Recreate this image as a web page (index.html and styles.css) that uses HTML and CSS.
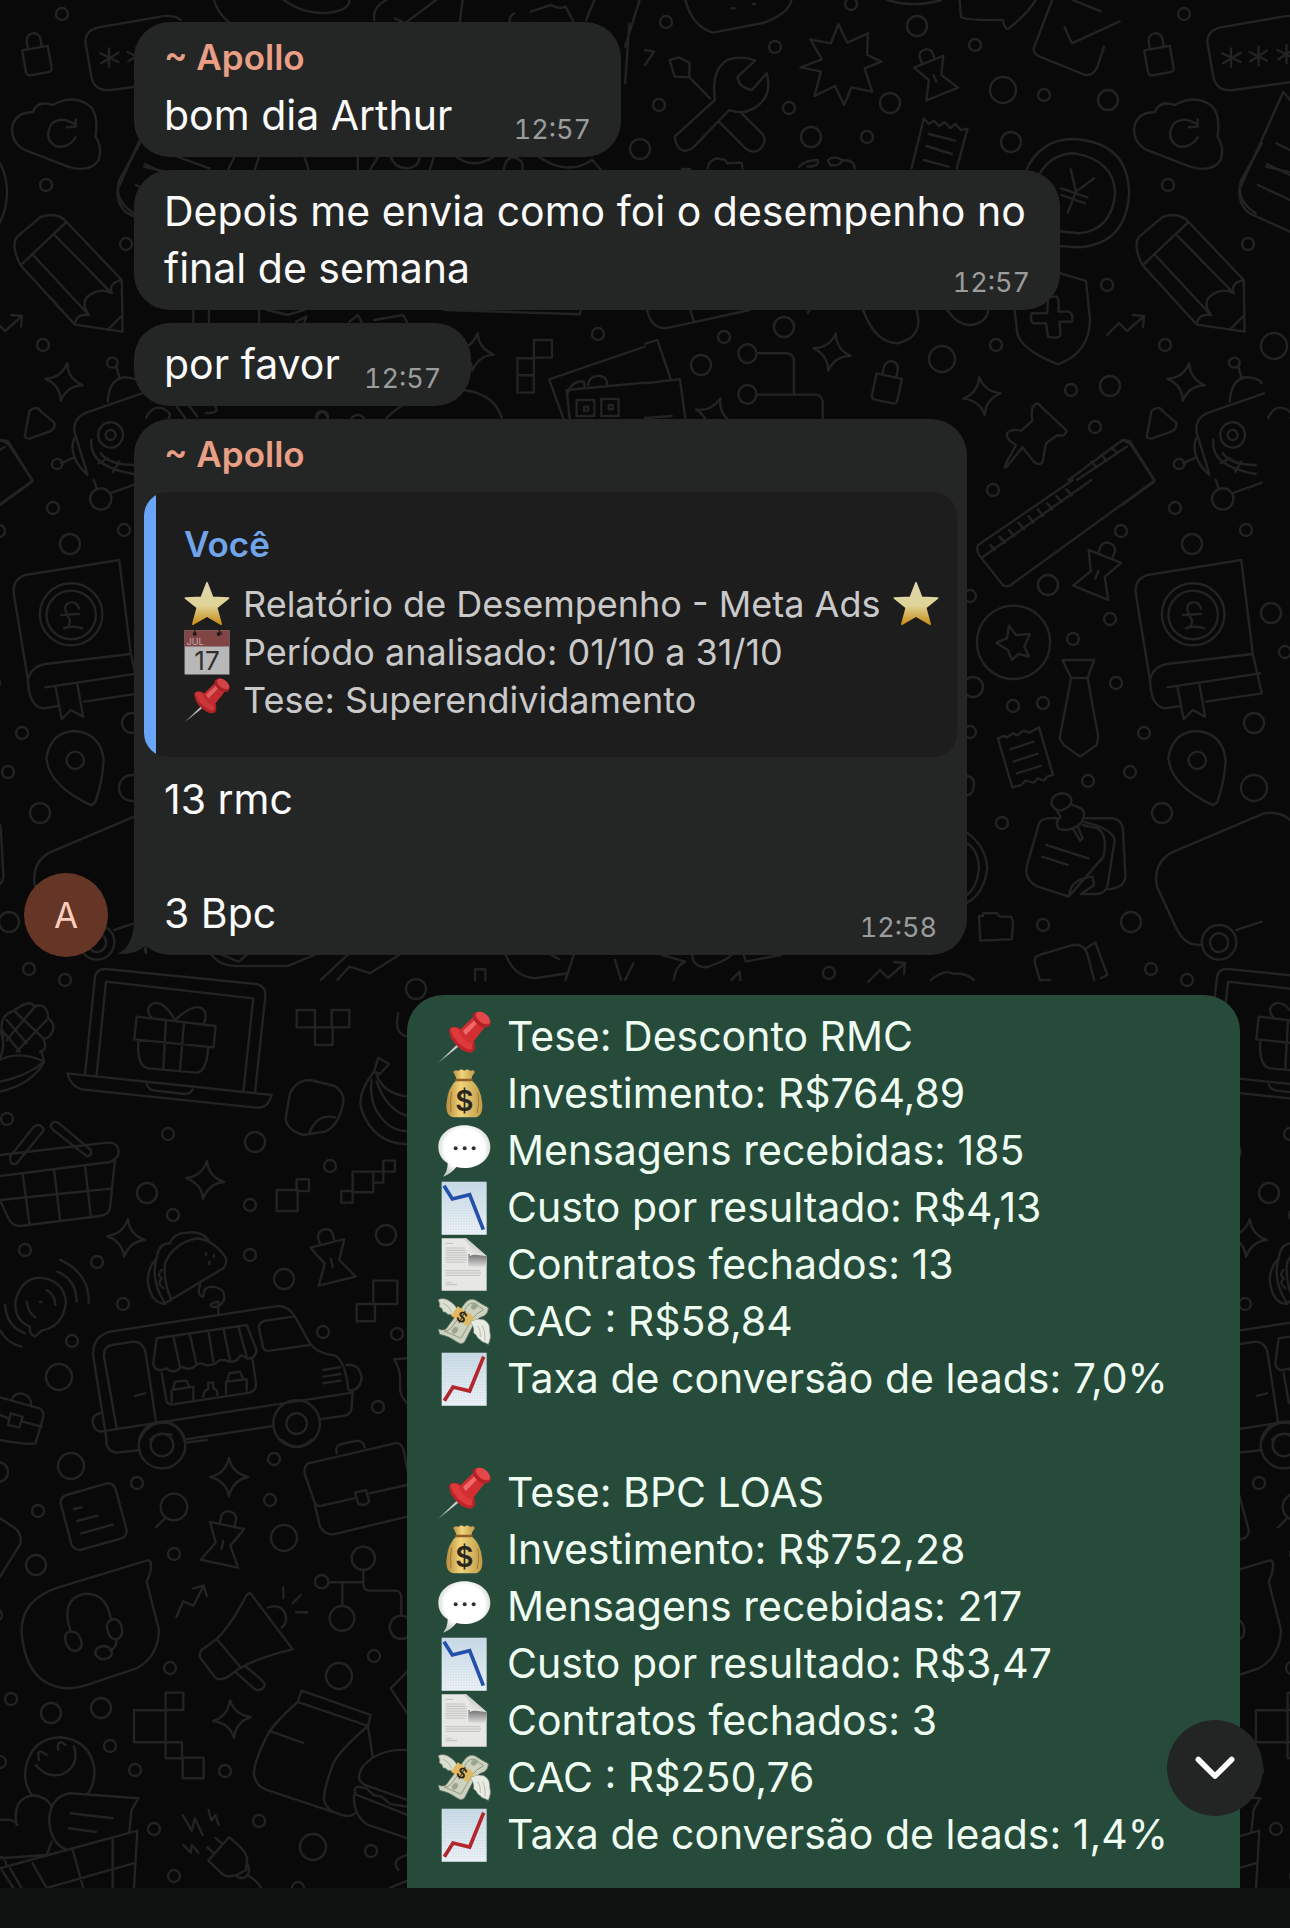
FILE: index.html
```html
<!DOCTYPE html>
<html lang="pt-BR">
<head>
  <meta charset="UTF-8">
  <meta name="viewport" content="width=device-width, initial-scale=1.0">
  <title>Conversa</title>
  <link rel="stylesheet" href="styles.css">
</head>
<body>
  <!-- Icon definitions -->
  <svg class="defs" aria-hidden="true">
    <defs>
      <linearGradient id="gold" x1="0" y1="0" x2="0" y2="1">
        <stop offset="0" stop-color="#f3e9c0" />
        <stop offset="0.55" stop-color="#f4e8a4" />
        <stop offset="1" stop-color="#dc9a18" />
      </linearGradient>
      <linearGradient id="sack" x1="0" y1="0" x2="1" y2="0">
        <stop offset="0" stop-color="#b98d3c" />
        <stop offset="0.4" stop-color="#f0d47c" />
        <stop offset="1" stop-color="#c29a48" />
      </linearGradient>
      <linearGradient id="sheet" x1="0" y1="0" x2="0" y2="1">
        <stop offset="0" stop-color="#c9dbe8" />
        <stop offset="1" stop-color="#eef4f8" />
      </linearGradient>
      <linearGradient id="shade" x1="0" y1="0" x2="0" y2="1">
        <stop offset="0" stop-color="#6e6f6e" />
        <stop offset="1" stop-color="#e7e7e5" />
      </linearGradient>
      <linearGradient id="curl" x1="0" y1="1" x2="1" y2="0">
        <stop offset="0" stop-color="#ffffff" />
        <stop offset="0.5" stop-color="#d4d4d3" />
        <stop offset="1" stop-color="#5f6160" />
      </linearGradient>
      <radialGradient id="balloon" cx="0.5" cy="0.45" r="0.55">
        <stop offset="0.7" stop-color="#ffffff" />
        <stop offset="1" stop-color="#c9cfcd" />
      </radialGradient>
      <pattern id="grid" width="8" height="8" patternUnits="userSpaceOnUse">
        <path d="M0 0H8M0 0V8" stroke="#aec3d2" stroke-width="1" />
      </pattern>
      <symbol id="pin" viewBox="0 0 162 162">
        <path d="M74 90L81 97L4 158Z" fill="#c9cdd0" />
        <path d="M36 58Q44 46 64 52L112 96Q118 118 106 127Q84 130 62 110Q36 86 36 58Z" fill="#bd2429" />
        <path d="M40 56Q52 48 68 60L106 98Q108 112 102 120Q84 116 64 98Q44 76 40 56Z" fill="#dc3a3d" />
        <path d="M64 64L110 20L146 48L104 102Q78 92 64 64Z" fill="#d42d32" />
        <path d="M78 62L116 28L126 34L86 76Z" fill="#ee6a68" />
        <ellipse cx="134" cy="29" rx="30" ry="19" transform="rotate(38 134 29)" fill="#b52126" />
        <ellipse cx="138" cy="24" rx="25" ry="14" transform="rotate(38 138 24)" fill="#e5484a" />
      </symbol>
      <symbol id="bag" viewBox="0 0 162 162">
        <path d="M48 14Q56 6 64 12Q72 4 82 11Q92 4 100 12Q110 6 114 15Q104 26 102 40H60Q56 26 48 14Z" fill="url(#sack)" />
        <path d="M60 38H102Q132 60 136 110Q138 150 112 151H52Q26 150 28 112Q32 60 60 38Z" fill="url(#sack)" />
        <path d="M58 39H104" stroke="#8a5f2b" stroke-width="7" stroke-linecap="round" />
        <path d="M44 74Q38 100 42 136M122 78Q128 104 120 138" fill="none" stroke="#a27a31" stroke-width="3" />
        <text x="82" y="132" text-anchor="middle" class="dollar">$</text>
      </symbol>
      <symbol id="talk" viewBox="0 0 162 162">
        <path d="M82 4C126 4 160 32 160 68C160 106 124 132 82 132C74 132 66 131 58 129Q44 148 18 158Q32 142 32 118C14 106 4 90 4 68C4 32 38 4 82 4Z" fill="url(#balloon)" />
        <g fill="#2e3136"><circle cx="56" cy="73" r="6" /><circle cx="83" cy="73" r="6" /><circle cx="110" cy="73" r="6" /></g>
      </symbol>
      <symbol id="chart-down" viewBox="0 0 162 162">
        <path d="M14 2H149V161H14Z" fill="url(#sheet)" /><path d="M14 2H149V161H14Z" fill="url(#grid)" />
        <path d="M21 14L46 54L98 41L139 146" fill="none" stroke="#2450ab" stroke-width="11" />
      </symbol>
      <symbol id="chart-up" viewBox="0 0 162 162">
        <path d="M14 2H149V161H14Z" fill="url(#sheet)" /><path d="M14 2H149V161H14Z" fill="url(#grid)" />
        <path d="M22 146L48 105L98 117L140 14" fill="none" stroke="#b3262b" stroke-width="11" />
      </symbol>
      <symbol id="page" viewBox="0 0 162 162">
        <path d="M14 1H88L149 54V158H14Z" fill="#e7e7e5" />
        <path d="M26 16H48M26 30H84M26 37H88M26 44H90M26 51H90M26 58H90M26 65H90M26 72H86M26 98H128M26 105H132M26 112H128M26 134H46M26 140H60" stroke="#adadac" stroke-width="2" />
        <path d="M94 48L149 54V84Q120 96 94 84Z" fill="url(#shade)" />
        <path d="M78 1H88L149 54Q122 42 98 54Q104 22 78 1Z" fill="url(#curl)" />
      </symbol>
      <symbol id="money" viewBox="0 0 162 162">
        <path d="M4 14Q22 6 40 20Q60 32 62 54L48 62Q42 56 32 58Q30 50 18 50Q18 40 8 36Q10 26 4 14Z" fill="#dbdfd2" stroke="#8e9789" stroke-width="2" />
        <path d="M4 102Q24 112 34 92Q62 56 80 30Q96 6 116 16Q134 28 154 38Q154 54 142 62Q124 66 112 84Q94 118 82 142Q72 150 62 142Q34 122 8 118Z" fill="#ccd2bd" stroke="#6f7a6b" stroke-width="2" />
        <path d="M22 108Q38 108 48 92L90 34Q102 20 114 26L140 44Q120 52 104 74L72 130Z" fill="none" stroke="#8f9a86" stroke-width="3" />
        <ellipse cx="54" cy="106" rx="11" ry="8" transform="rotate(-50 54 106)" fill="#99a58f" />
        <ellipse cx="112" cy="34" rx="11" ry="8" transform="rotate(-40 112 34)" fill="#99a58f" />
        <path d="M62 34L112 66L92 94L42 62Z" fill="#e0b962" />
        <text x="74" y="82" text-anchor="middle" transform="rotate(28 74 68)" class="dollar dollar-small">$</text>
        <path d="M100 80Q118 68 140 74Q160 84 158 108Q164 128 154 148Q144 142 136 140Q128 132 122 128Q118 118 110 114Q114 98 100 80Z" fill="#e9ebe2" stroke="#8e9789" stroke-width="2" />
        <path d="M122 92Q132 104 130 126M136 92Q146 108 144 136M18 24Q34 30 44 52" fill="none" stroke="#9aa294" stroke-width="2" />
      </symbol>
      <symbol id="star" viewBox="0 0 162 162">
        <path d="M81 6L101 58L157 60L115 94L131 152L81 123L31 152L47 94L5 60L61 58Z" fill="url(#gold)" stroke="url(#gold)" stroke-width="6" stroke-linejoin="round" />
      </symbol>
      <symbol id="calendar" viewBox="0 0 162 162">
        <path d="M2 4H160V160H2Z" fill="#c9c9c9" />
        <path d="M2 4H160V62H2Z" fill="#8d4a4b" />
        <circle cx="38" cy="18" r="7" fill="#231718" /><circle cx="122" cy="18" r="7" fill="#231718" />
        <path d="M38 2V18M122 2L134 20" stroke="#231718" stroke-width="4" />
        <text x="9" y="56" class="cal-month">JUL</text>
        <text x="81" y="146" text-anchor="middle" class="cal-day">17</text>
      </symbol>

      <!-- Wallpaper doodles -->
      <path id="spark" d="M0 -19Q3 -4 19 0Q4 3 0 19Q-3 4 -19 0Q-4 -3 0 -19Z" />
      <path id="tack" d="M-7 -17V-26A8 8 0 0 1 8 -26V-17M-17 -17H18L8 2L20 22H-18L-7 2ZM0 -1V7" />
      <path id="lock" d="M-13 -6H13V16Q13 20 9 20H-9Q-13 20 -13 16ZM-7 -6V-14A7 7 0 0 1 7 -14V-6" />
      <path id="trend" d="M-20 8L-8 -4L0 4L16 -10M6 -12L17 -11L16 0" />
      <g id="tile">
        <g class="dots-s">
          <circle cx="62" cy="14" /><circle cx="46" cy="185" /><circle cx="126" cy="244" /><circle cx="43" cy="345" /><circle cx="598" cy="334" />
          <circle cx="666" cy="22" /><circle cx="851" cy="4" /><circle cx="775" cy="47" /><circle cx="975" cy="45" /><circle cx="1044" cy="95" />
          <circle cx="659" cy="105" /><circle cx="789" cy="108" /><circle cx="867" cy="137" /><circle cx="1107" cy="285" /><circle cx="724" cy="337" />
          <circle cx="996" cy="345" /><circle cx="1071" cy="390" /><circle cx="1095" cy="427" /><circle cx="322" cy="417" /><circle cx="53" cy="508" /><circle cx="124" cy="530" />
          <circle cx="22" cy="733" /><circle cx="8" cy="772" /><circle cx="29" cy="969" /><circle cx="993" cy="490" /><circle cx="1121" cy="531" />
          <circle cx="1110" cy="619" /><circle cx="163" cy="652" /><circle cx="970" cy="596" /><circle cx="1073" cy="639" /><circle cx="1013" cy="706" />
          <circle cx="1043" cy="703" /><circle cx="1116" cy="683" /><circle cx="970" cy="732" /><circle cx="1088" cy="781" /><circle cx="1002" cy="823" />
          <circle cx="1043" cy="925" /><circle cx="829" cy="973" /><circle cx="65" cy="980" /><circle cx="7" cy="1119" /><circle cx="168" cy="1134" />
          <circle cx="330" cy="1166" /><circle cx="250" cy="1205" /><circle cx="173" cy="1215" /><circle cx="25" cy="1250" /><circle cx="97" cy="1262" />
          <circle cx="250" cy="1255" /><circle cx="123" cy="1304" /><circle cx="323" cy="1332" /><circle cx="397" cy="1334" /><circle cx="72" cy="1341" />
          <circle cx="378" cy="1407" /><circle cx="274" cy="1459" /><circle cx="137" cy="1483" /><circle cx="38" cy="1511" /><circle cx="270" cy="1500" />
          <circle cx="174" cy="1554" /><circle cx="374" cy="1656" /><circle cx="170" cy="1668" /><circle cx="11" cy="1699" /><circle cx="110" cy="1746" />
          <circle cx="135" cy="1770" /><circle cx="225" cy="1771" /><circle cx="0" cy="1762" /><circle cx="154" cy="1829" /><circle cx="259" cy="1821" />
          <circle cx="371" cy="1851" /><circle cx="174" cy="1876" /><circle cx="298" cy="1888" /><circle cx="-4" cy="1615" />
        </g>
        <g class="dots-m">
          <circle cx="640" cy="149" /><circle cx="917" cy="26" /><circle cx="890" cy="103" /><circle cx="1108" cy="100" /><circle cx="811" cy="137" />
          <circle cx="1011" cy="142" /><circle cx="784" cy="327" /><circle cx="701" cy="365" /><circle cx="1110" cy="386" /><circle cx="70" cy="544" />
          <circle cx="40" cy="813" /><circle cx="9" cy="922" /><circle cx="132" cy="723" /><circle cx="1048" cy="585" /><circle cx="149" cy="613" />
          <circle cx="973" cy="687" /><circle cx="416" cy="989" /><circle cx="255" cy="1142" /><circle cx="147" cy="1193" /><circle cx="386" cy="1235" />
          <circle cx="284" cy="1279" /><circle cx="-2" cy="1472" /><circle cx="36" cy="1565" /><circle cx="51" cy="1713" /><circle cx="101" cy="1708" />
        </g>
        <g class="dots-l">
          <circle cx="1003" cy="90" /><circle cx="942" cy="359" /><circle cx="152" cy="346" /><circle cx="132" cy="788" /><circle cx="59" cy="1377" />
          <circle cx="71" cy="1466" /><circle cx="284" cy="1538" /><circle cx="339" cy="1676" /><circle cx="313" cy="1847" />
        </g>
        <use href="#spark" transform="translate(64 382) rotate(10)" />
        <use href="#spark" transform="translate(475 352) rotate(8)" />
        <use href="#spark" transform="translate(832 352) rotate(12)" />
        <use href="#spark" transform="translate(982 396) rotate(-8)" />
        <use href="#spark" transform="translate(714 416) rotate(20)" />
        <use href="#spark" transform="translate(205 1180) rotate(6)" />
        <use href="#spark" transform="translate(126 1238) rotate(6)" />
        <use href="#spark" transform="translate(229 1477)" />
        <use href="#spark" transform="translate(232 1719) rotate(-6)" />
        <use href="#tack" transform="translate(934 76) rotate(-22) scale(.9)" />
        <use href="#tack" transform="translate(1098 572) rotate(22)" />
        <use href="#tack" transform="translate(331 1260) rotate(-14)" />
        <use href="#tack" transform="translate(223 1542) rotate(12)" />
        <use href="#lock" transform="translate(36 54) rotate(-10)" />
        <use href="#lock" transform="translate(888 382) rotate(12)" />
        <use href="#trend" transform="translate(1127 327)" />
        <use href="#trend" transform="translate(888 974)" />
        <use href="#trend" transform="translate(192 1602) rotate(-22)" />

        <!-- top left: password, cloud, pencil, robot -->
        <g transform="scale(.4113 .3333)">
          <path d="M440 60Q420 40 380 52L240 82Q205 92 208 130L222 230Q230 275 270 270L420 245M265 145V200M244 160L288 186M288 158L246 190M332 140V196M310 156L352 182M352 152L312 184M400 134V190M378 150L420 176M420 146L380 178" />
          <path d="M60 450Q20 420 32 370Q45 335 80 337Q90 300 128 315Q180 280 220 320Q240 350 232 410Q250 440 240 480Q220 520 165 500ZM184 375Q150 345 125 372Q105 415 135 438Q165 448 184 412M184 358V380L162 382" />
          <path d="M50 796L162 666L296 840L298 995L182 974ZM50 796Q25 735 42 710L100 650Q140 635 162 666M78 762L216 945M135 708L272 880M182 974Q185 940 216 945Q190 900 228 878Q250 865 272 880Q262 850 296 840M262 990L298 945" />
          <path d="M520 0Q530 40 555 64M690 0Q740 45 800 38Q850 30 850 0M910 60Q905 20 940 0M960 55L985 70L1060 0M1125 0L1118 64M1250 40A26 26 0 1 0 1290 68M1290 35L1340 15Q1360 30 1375 20L1394 64M1445 0L1425 60M1530 70L1520 250M1555 0L1520 140" />
          <path d="M340 430L290 540Q275 600 325 640M350 500L420 520M430 470L510 505M570 470L555 508M630 470L620 508M740 470L750 508M870 470V508M920 470L900 508M950 470Q960 505 990 505Q1020 500 1020 470M1045 510L1055 470M1110 470Q1150 510 1200 470M1225 508Q1230 470 1250 472Q1275 480 1270 508M1310 470Q1380 530 1440 480L1460 508M630 930V968M470 930V968M508 930V968M650 930L700 945L740 930M720 965L745 950L740 968M850 965L870 945L880 968M910 960L980 945L990 968M1080 930L1410 943L1412 925" />
          <path d="M60 1310L72 1232Q90 1215 100 1235L132 1268Q136 1285 120 1295L72 1316Q62 1316 60 1310ZM262 1205Q265 1140 300 1132Q330 1132 340 1150M283 1100L290 1132M272 1073A13 15 0 1 0 274 1103A13 15 0 1 0 272 1073M345 1180L205 1240Q175 1260 182 1300L212 1420M180 1315Q165 1370 212 1425M148 1390L180 1372M138 1377A13 15 0 1 0 140 1407A13 15 0 1 0 138 1377M268 1267A30 38 0 1 0 270 1343A30 38 0 1 0 268 1267M268 1290A12 15 0 1 0 270 1320A12 15 0 1 0 268 1290M222 1320Q215 1400 325 1422M245 1360Q265 1395 325 1395M240 1390L262 1375M275 1415L290 1385M0 1320Q20 1325 30 1350L78 1440" />
          <path d="M1258 1075H1298V1020H1342V1073H1298V1178H1258ZM1258 1126H1298M1335 1138L1568 1040M1335 1138L1370 1256M1378 1170L1568 1148M1378 1170L1385 1256M1380 1180Q1390 1140 1420 1145L1422 1165M1430 1155Q1432 1125 1460 1128Q1480 1135 1475 1160M1402 1200H1445V1248H1402ZM1462 1197H1504V1248H1462ZM1420 1220H1430V1232H1420ZM1480 1215H1490V1228H1480ZM940 1254Q1000 1180 1100 1168Q1200 1170 1220 1254M355 1254Q370 1215 395 1225Q420 1240 410 1254M430 1220L450 1254M460 1218L480 1250M520 1215Q540 1240 500 1240M770 1254Q775 1230 790 1238L797 1254M855 1254Q870 1235 885 1254" />
        </g>

        <!-- top right: tools, burst, receipt, coin, shield, ruler -->
        <g transform="translate(645 0) scale(.4113 .3333)">
          <path d="M98 0Q115 80 165 98L290 68Q350 40 356 0M210 25H218M262 12H268M590 0Q650 25 720 0M765 0L768 50Q775 62 870 60Q875 92 885 85Q930 40 950 0M990 0L945 145Q945 165 960 170L1070 225Q1090 228 1100 200L1116 140M1020 82L1038 130L1154 64M1040 0L1108 34" />
          <path d="M470 72L492 128L542 100L540 165L575 185L534 205L552 275L502 262L484 315L462 258L412 288L428 215L378 202L430 178L402 118L452 130Z" />
          <path d="M72 410L170 300Q160 210 200 180Q235 165 268 182L225 230Q228 265 260 270L296 220Q312 290 265 325Q235 345 205 330L115 445Q80 470 72 410ZM60 180L82 172L108 188V232L72 230ZM108 232L158 295M182 368L240 440Q265 470 285 440Q298 415 280 395L235 340M0 150L22 155L0 195" />
          <path d="M648 505L678 355L690 372L702 362L715 378L728 366L742 384L755 372L768 390L784 386L758 505M690 402L754 422M684 438L746 462M678 480L738 500M152 505Q155 480 175 475L195 480L200 490L235 488L237 505M375 500Q390 480 420 480Q425 500 395 500M445 480Q460 465 480 480Q475 500 450 495ZM480 480Q510 480 510 505M90 507H110" />
          <path d="M925 515Q960 418 1040 417Q1175 425 1177 580Q1170 735 1050 742L1008 738M960 520Q990 460 1045 460Q1140 480 1143 580Q1135 690 1055 700L1008 694M1035 508L1048 575L1092 535M1048 575L1028 638M1012 565L1076 592M1012 585L1070 610" />
          <path d="M1010 820L1072 843L1082 960Q1080 1060 1004 1093Q915 1050 905 1000L898 920M980 890H1000Q1008 895 1005 935H1030Q1042 940 1038 965H1008L1010 1005Q1005 1018 980 1010L975 970H945Q935 965 940 940H978ZM530 930Q560 1030 615 1030Q680 1010 660 930M735 930Q760 975 790 975Q830 970 835 930M5 930Q15 985 50 985L255 930M110 930L118 962M400 930L396 938" />
          <path d="M248 1033A22 28 0 1 0 250 1089A22 28 0 1 0 248 1033M248 1155A22 28 0 1 0 250 1211A22 28 0 1 0 248 1155M272 1060H345Q362 1062 362 1085V1182M272 1184H415Q430 1186 432 1205V1256M0 1032L30 1020L62 1136M0 1150L85 1138L98 1256M0 1254L65 1248" />
          <path d="M955 1210L1025 1292Q1022 1312 1002 1306L975 1330L966 1388Q955 1400 942 1380L918 1342L880 1400Q870 1410 880 1385L902 1335Q878 1320 880 1300Q890 1285 915 1292L942 1262Q935 1215 955 1210ZM1030 1440L1150 1330Q1165 1315 1180 1325L1238 1440M1050 1440L1172 1340M1085 1385L1098 1402M1110 1365L1122 1382M1135 1343L1148 1360" />
          <path d="M1552 275L1445 570Q1445 620 1470 640L1568 695M1552 275L1568 300M1535 430L1568 450M1512 492L1568 525M1490 555L1568 600" />
        </g>

        <!-- middle left: book, place mark, cart -->
        <g transform="translate(0 480) scale(.4113 .3333)">
          <path d="M290 240L62 285Q28 300 34 345L68 600Q75 560 110 552L318 522ZM68 600Q70 680 105 685L140 678M110 622L336 580M318 522L340 640L204 665M135 622L150 718L172 690L202 710L188 612M172 310A76 93 0 1 0 174 496A76 93 0 1 0 172 310M172 332A60 73 0 1 0 174 478A60 73 0 1 0 172 332M192 385Q185 360 165 370Q150 380 170 420Q172 440 155 445Q180 435 200 445M148 405L192 402" />
          <path d="M222 976Q115 915 113 830Q125 755 182 753Q245 760 252 840Q250 900 232 966ZM182 815A21 26 0 1 0 184 867A21 26 0 1 0 182 815M244 25A26 32 0 1 0 246 89A26 32 0 1 0 244 25M228 0L236 28M268 40L340 8M0 75L78 5" />
          <path d="M190 1395L175 1393Q150 1390 130 1340L85 1220Q75 1150 120 1118L345 1000Q400 990 430 1050M235 1335A42 52 0 1 0 237 1439A42 52 0 1 0 235 1335M235 1360A22 28 0 1 0 237 1416A22 28 0 1 0 235 1360M278 1350L340 1325" />
          <path d="M515 1425Q530 1455 570 1458H700L765 1425M540 1425L580 1445L600 1425M780 1500L845 1425M820 1500L850 1460L900 1480L970 1425M1230 1425Q1250 1490 1300 1495L1380 1480M1395 1425L1375 1500M1340 1425L1360 1438M1155 1500V1468H1180V1500M1495 1440L1510 1500M1540 1450L1520 1500" />
        </g>

        <!-- middle right: ruler end, badge, tie, ticket, note, camera -->
        <g transform="translate(645 480) scale(.4113 .3333)">
          <path d="M1040 0L810 195Q805 210 812 225L870 315Q882 325 895 310L1230 10L1238 0M820 232L1085 0M840 195L850 210M862 170L875 188M885 150L898 168M908 128L922 148M932 108L945 128M955 88L968 108M978 70L990 88M1000 48L1014 66M1024 28L1038 46" />
          <path d="M895 377A89 110 0 1 0 897 597A89 110 0 1 0 895 377M885 437L902 465L936 462L922 500L934 530L908 522L892 540L882 510L854 488L880 475Z" />
          <path d="M1015 540H1092L1076 594H1036ZM1036 594L1008 775L1018 795L1058 830L1098 795L1102 770L1076 594M858 775L872 768L880 772L895 760L905 766L920 752L935 758L958 742L992 885L978 890L970 902L955 895L945 908L925 902L915 915L893 922ZM888 808L945 785M896 845L954 822M904 880L962 858" />
          <path d="M1000 1015Q965 1012 958 1030L928 1160Q922 1200 955 1220L1030 1250L1115 1130Q1125 1060 1100 1045L1065 1035M1030 1250Q1035 1195 1088 1190L1092 1215L1060 1242H1100Q1120 1240 1125 1215L1142 1080Q1135 1045 1065 1025M1072 1015H1130Q1160 1015 1162 1050L1168 1190Q1165 1225 1125 1228M975 1095L1078 1135M965 1130L1028 1155M1012 940Q988 945 988 970Q995 995 1015 990Q1040 980 1036 955Q1030 940 1012 940ZM1000 990L1010 1010Q995 1030 1005 1045Q1030 1060 1060 1030Q1075 1000 1060 985L1040 975M1040 1045L1058 1082L1064 1075L1052 1040" />
          <path d="M812 1308H822V1300H856L862 1310H890L895 1325L892 1378L815 1382ZM985 1500H960L948 1450Q945 1430 960 1425L1040 1395Q1065 1390 1075 1420L1092 1500M1072 1405L1095 1388L1124 1485L1108 1495M783 1058Q830 1100 832 1165Q825 1240 783 1268M783 1090Q810 1110 812 1165Q808 1220 783 1245M783 888Q800 890 800 915Q798 945 783 946M70 1500Q75 1455 98 1445L40 1425M115 1425Q115 1460 150 1462Q200 1440 210 1425M240 1425L245 1445L330 1425M210 1500L230 1475L232 1500M695 1500Q730 1465 750 1482Q775 1475 800 1500" />
        </g>

        <!-- lower left: laptop, corn, basket, taco, van -->
        <g transform="translate(0 960) scale(.3333)">
          <path d="M255 345L285 50Q290 25 318 27L770 72Q800 80 796 110L765 398M290 345L318 65L760 115L730 395M202 340L815 405Q805 445 770 443L245 388Q212 380 202 340ZM440 372Q445 390 465 392L555 402Q570 402 578 388M410 170L647 198L641 262L403 238ZM415 240Q410 320 445 325L590 338Q620 335 625 262M498 182L490 325M552 188L540 332M525 180Q490 120 460 130Q430 145 457 175M525 180Q580 130 605 145Q625 160 612 190" />
          <path d="M0 300Q60 270 132 305Q100 370 0 395M0 365Q80 350 132 305L125 275M10 230Q-5 180 25 160Q45 150 60 140Q90 120 105 140Q140 125 145 175Q170 195 155 220Q140 240 130 235Q145 270 120 275M20 180L80 250M45 155L130 235M10 215L60 275M105 140L20 240M140 180L50 275M0 210Q20 250 0 295" />
          <path d="M0 585L320 548Q360 545 355 585Q345 602 330 606L0 648M0 720L332 686M345 600L330 745Q325 765 300 768L60 798Q35 798 25 775L0 720M68 640L88 790M162 628L180 778M255 615L272 765M30 590L100 502Q120 485 132 510L50 610Q30 620 30 590ZM152 500Q155 480 175 488L272 570Q278 585 262 590L160 510ZM890 150H945V202H890ZM995 150H1048V202H995ZM945 202H998V255H945Z" />
          <path d="M870 400Q890 360 930 360L1005 378Q1035 400 1030 430Q1015 500 975 515L910 525Q860 510 857 475ZM928 520Q950 460 1005 472M1135 293L1167 312L1140 342L1122 335ZM1122 335Q1070 400 1085 450Q1120 550 1222 553M1115 360Q1105 440 1160 490Q1190 515 1222 513M1130 345Q1150 400 1222 410M1130 365Q1160 450 1222 468M830 690H893V753H830ZM890 658H927V693H890ZM1024 693H1058V728H1024ZM1058 635H1120V697H1058ZM1120 635H1150V668H1120ZM1150 602H1185V635H1150ZM1120 962H1192V1032H1120ZM1070 1032H1125V1084H1070ZM1195 160Q1180 220 1222 230" />
          <path d="M495 1030L670 925Q685 905 675 890Q640 840 590 835Q520 850 495 910Q490 970 515 1020ZM495 1032Q450 1030 443 960Q445 920 470 895Q475 850 510 850Q520 820 560 818Q610 810 630 848M470 895Q450 960 495 1030M485 930Q470 945 485 955Q470 970 490 985M618 880V886M642 885V891M628 906V912M600 975Q590 1010 610 1010Q610 980 635 980Q680 985 672 1020Q660 1045 635 1040Q625 1030 655 1025L655 1060" />
          <path d="M105 1130Q85 1120 90 1100Q40 1080 47 1020Q65 955 120 953Q190 960 198 1025Q190 1100 125 1112ZM120 1026H124M80 1025Q85 1060 106 1072M140 990Q165 1005 166 1035M172 935Q230 960 230 1025M180 900Q270 940 266 1030M15 1035Q20 1100 75 1120M0 1110Q20 1150 65 1160" />
          <path d="M320 1440L280 1190Q275 1130 330 1115L820 1040Q860 1030 885 1070L930 1150Q950 1180 1000 1185Q1035 1195 1045 1290M350 1405L312 1190Q310 1160 335 1155L400 1145Q430 1145 437 1180L468 1385M300 1415L1058 1298L1055 1345Q1050 1365 1035 1367L960 1378M820 1398L560 1438M300 1360Q275 1365 278 1390Q285 1415 305 1415M405 1308L435 1300M880 1070L795 1082Q775 1088 777 1105L790 1165Q795 1175 810 1172L930 1155M470 1135L740 1095L770 1170Q765 1200 740 1195Q720 1180 720 1190Q700 1215 675 1200L660 1200Q640 1220 615 1215Q600 1205 590 1215Q570 1235 545 1220Q520 1245 500 1225Q465 1240 460 1210ZM520 1130L540 1220M570 1125L590 1215M625 1112L640 1205M670 1105L690 1200M715 1100L740 1190M485 1240L500 1325Q505 1335 520 1333L750 1298Q770 1290 768 1270L758 1200M515 1325V1290L580 1280V1318M520 1285L525 1265L560 1262L568 1282M610 1310Q612 1290 625 1288V1268H640V1285Q655 1290 652 1305M678 1300V1265L740 1258V1292M682 1262L688 1240L720 1235L730 1258M970 1230L1020 1222M970 1250L1022 1242M970 1270L1022 1262M1040 1215Q1080 1210 1085 1255Q1080 1290 1050 1292M420 1440Q440 1390 490 1388Q540 1392 552 1440M450 1440Q470 1415 515 1425" />
          <circle cx="890" cy="1391" r="70" /><circle cx="890" cy="1391" r="31" />
          <path d="M0 1312L118 1345Q132 1352 130 1370L110 1440M0 1365L25 1375M68 1385L125 1400M32 1360L68 1370L58 1403L24 1395ZM35 1320Q45 1295 70 1302Q95 1310 94 1340M1222 1195L1182 1198Q1205 1230 1200 1280Q1200 1310 1222 1330" />
        </g>

        <!-- bottom left: note, headset, megaphone, smile, bag, plug -->
        <g transform="translate(0 1440) scale(.3333)">
          <circle cx="486" cy="15" r="70" /><circle cx="486" cy="15" r="34" /><circle cx="522" cy="201" r="40" />
          <path d="M318 0Q320 35 350 38L420 30M556 8L620 0M845 0Q890 40 935 0M495 235L468 262M200 165L320 130Q340 128 347 148L380 270Q380 290 365 295L240 330Q222 328 215 315L182 190Q180 172 200 165ZM222 207L244 202M232 243L292 227M243 280L338 254M0 235L45 265Q65 280 62 310L0 410M0 0Q80 15 108 10V0" />
          <path d="M925 70L1185 10Q1205 5 1212 35L1222 90M925 70Q910 80 915 105L945 190Q950 200 965 197L1062 175M1108 160L1222 135M945 195L960 260Q975 285 1000 283L1222 230M1010 40Q1005 15 1025 12L1070 2Q1090 2 1095 22M1065 158L1098 150L1108 185L1095 195L1075 192Z" />
          <path d="M440 362L175 442Q60 480 65 580Q80 740 205 745Q240 745 290 725L410 685Q475 650 477 570L440 425Q455 395 453 370Q450 360 440 362ZM212 575Q180 480 250 462Q320 455 333 540M215 575Q190 575 197 605Q205 635 230 633Q250 625 243 600Q235 575 215 575ZM340 537Q315 545 322 570Q330 600 350 598Q372 590 365 560Q358 537 340 537ZM350 598Q350 625 330 632M308 618Q280 625 288 645Q300 662 320 656Q340 650 335 630Q325 618 308 618Z" />
          <path d="M750 458L878 628Q740 660 685 710Q660 725 645 712L602 655Q595 640 605 630L650 597Q690 560 740 465ZM650 597L722 682M805 502Q850 490 858 530Q860 555 845 562M705 695L765 748Q785 755 795 735Q795 725 735 678M850 442V475M902 465L878 490M888 517H922" />
          <circle cx="1090" cy="355" r="35" /><circle cx="965" cy="425" r="20" /><circle cx="1026" cy="535" r="37" /><circle cx="1204" cy="562" r="35" />
          <path d="M1090 390V435Q1092 452 1110 452H1190Q1202 455 1204 470V527M985 427H1090M1027 430V497M497 758H550V810H497ZM402 811H497V907H402ZM497 907H546V955H497ZM548 953H611V1015H548ZM1222 695L1172 745L1222 820" />
          <path d="M95 1065Q70 1030 77 985Q95 895 180 892Q270 900 283 985Q285 1030 265 1058M107 975Q140 1015 185 1003Q240 980 222 918M117 960Q110 930 125 935L140 945M175 930Q170 905 185 907L197 915M50 1155Q35 1075 100 1066Q140 1070 155 1100M0 1140Q45 1135 52 1155M200 1230Q145 1205 148 1130Q155 1070 210 1060L415 1075Q400 1100 395 1110L388 1175M212 1120L338 1135M207 1165L288 1176M0 1285L412 1172L402 1344M0 1255L140 1245L155 1205M98 1270L140 1344L400 1270M218 1230L250 1344M338 1195V1344M5 1290L40 1344M30 1285L65 1344M0 1250Q15 1250 20 1280" />
          <path d="M905 752L1112 825L1104 858L893 786ZM893 786Q820 850 800 890Q760 970 762 1005Q770 1040 800 1050L1035 1128Q1060 1130 1070 1115M1104 858Q1020 930 1000 970Q970 1050 972 1080Q980 1110 1010 1120M1104 858L1118 950M808 873L910 909M1222 1080L1095 1035Q1065 1020 1085 985Q1130 925 1222 930M1222 1125L1070 1065Q1055 1045 1075 1040L1100 1045L1120 1065L1145 1070L1170 1092L1222 1100M1062 1065Q1060 1130 1105 1155L1222 1195M1222 1245Q1170 1260 1195 1290M1170 1344L1222 1322" />
          <path d="M687 1192Q750 1240 740 1265L738 1290L710 1305Q680 1315 665 1300L625 1262ZM665 1210L647 1194M640 1238L622 1222M742 1270Q755 1300 735 1312Q715 1318 708 1305M742 1305Q775 1325 783 1344M548 1125L575 1172L585 1135L608 1185M626 1110L634 1142L646 1125L656 1155M550 1215L572 1238L576 1215L595 1238" />
        </g>
      </g>
    </defs>
  </svg>

  <main class="chat">
    <svg class="wallpaper" aria-hidden="true">
      <use href="#tile" x="-1122" />
      <use href="#tile" />
      <use href="#tile" x="1122" />
    </svg>

    <section class="messages">
      <article class="bubble bubble-in bubble-first">
        <h2 class="sender">~ Apollo</h2>
        <div class="body">
          <p>bom dia Arthur</p>
          <time>12:57</time>
        </div>
      </article>

      <article class="bubble bubble-in bubble-text">
        <div class="body">
          <p>Depois me envia como foi o desempenho no<br>final de semana</p>
          <time class="over">12:57</time>
        </div>
      </article>

      <article class="bubble bubble-in">
        <div class="body">
          <p>por favor</p>
          <time>12:57</time>
        </div>
      </article>

      <div class="row">
        <div class="avatar">A</div>
        <article class="bubble bubble-in bubble-wide">
          <svg class="tail" viewBox="0 0 30 36" aria-hidden="true"><path d="M17 0H30V36Q24 32 29 26Q20 36 0 35Q17 28 17 0Z" /></svg>
          <h2 class="sender">~ Apollo</h2>
          <blockquote class="quote">
            <h3>Você</h3>
            <p class="line"><svg class="icon"><use href="#star" /></svg>Relatório de Desempenho - Meta Ads<svg class="icon"><use href="#star" /></svg></p>
            <p class="line"><svg class="icon"><use href="#calendar" /></svg>Período analisado: 01/10 a 31/10</p>
            <p class="line"><svg class="icon"><use href="#pin" /></svg>Tese: Superendividamento</p>
          </blockquote>
          <div class="body">
            <p>13 rmc<br><br>3 Bpc</p>
            <time>12:58</time>
          </div>
        </article>
      </div>

      <article class="bubble bubble-out bubble-wide">
        <p class="line"><svg class="icon"><use href="#pin" /></svg>Tese: Desconto RMC</p>
        <p class="line"><svg class="icon"><use href="#bag" /></svg>Investimento: R$764,89</p>
        <p class="line"><svg class="icon"><use href="#talk" /></svg>Mensagens recebidas: 185</p>
        <p class="line"><svg class="icon"><use href="#chart-down" /></svg>Custo por resultado: R$4,13</p>
        <p class="line"><svg class="icon"><use href="#page" /></svg>Contratos fechados: 13</p>
        <p class="line"><svg class="icon"><use href="#money" /></svg>CAC : R$58,84</p>
        <p class="line"><svg class="icon"><use href="#chart-up" /></svg>Taxa de conversão de leads: 7,0%</p>
        <br>
        <p class="line"><svg class="icon"><use href="#pin" /></svg>Tese: BPC LOAS</p>
        <p class="line"><svg class="icon"><use href="#bag" /></svg>Investimento: R$752,28</p>
        <p class="line"><svg class="icon"><use href="#talk" /></svg>Mensagens recebidas: 217</p>
        <p class="line"><svg class="icon"><use href="#chart-down" /></svg>Custo por resultado: R$3,47</p>
        <p class="line"><svg class="icon"><use href="#page" /></svg>Contratos fechados: 3</p>
        <p class="line"><svg class="icon"><use href="#money" /></svg>CAC : R$250,76</p>
        <p class="line"><svg class="icon"><use href="#chart-up" /></svg>Taxa de conversão de leads: 1,4%</p>
      </article>
    </section>

    <button class="scroll-down" type="button" aria-label="Ir para o fim">
      <svg viewBox="0 0 36 24" aria-hidden="true"><path d="M3 4L18 19L33 4" /></svg>
    </button>
  </main>
  <footer class="bottom-bar"></footer>
</body>
</html>
```
FILE: styles.css
```css
* {
  box-sizing: border-box;
}

body {
  margin: 0;
  background: #090909;
  color: #fafafa;
  font-family: Inter, "Liberation Sans", sans-serif;
  font-size: 41px;
  line-height: 57px;
}

h2, h3, p, blockquote {
  margin: 0;
}

.defs {
  position: absolute;
  width: 0;
  height: 0;
}

.chat {
  position: relative;
  overflow: hidden;
}

/* Wallpaper */
.wallpaper {
  position: absolute;
  inset: 0;
  width: 100%;
  height: 100%;
  fill: none;
  stroke: #232323;
  stroke-width: 2.4;
  stroke-linejoin: round;
  stroke-linecap: round;
}

#tile path, #tile circle, #spark, #tack, #lock, #trend {
  vector-effect: non-scaling-stroke;
}

.dots-s circle { r: 6px; }
.dots-m circle { r: 10px; }
.dots-l circle { r: 13px; }

/* Messages */
.messages {
  position: relative;
  display: flex;
  flex-direction: column;
  align-items: flex-start;
  gap: 13px;
  padding: 22px 50px 0 134px;
}

.bubble {
  position: relative;
  padding: 13px 30px;
  border-radius: 36px;
}

.bubble-in {
  background: #242625;
}

.bubble-first {
  min-width: 487px;
}

.bubble-text {
  width: 100%;
  max-width: 926px;
}

.bubble-wide {
  width: 100%;
  max-width: 833px;
}

.bubble-out {
  align-self: flex-end;
  margin-top: 27px;
  padding-bottom: 25px;
  border-radius: 36px 36px 0 0;
  background: #264b3a;
  color: #eefcf2;
}

.sender {
  padding-bottom: 8px;
  color: #e99f85;
  font-size: 35px;
  font-weight: 600;
  line-height: 44px;
}

.body {
  display: flex;
  align-items: flex-end;
  justify-content: space-between;
  gap: 24px;
}

time {
  margin-bottom: -4px;
  color: #9b9c9c;
  font-size: 27px;
  line-height: 36px;
  font-variant-numeric: tabular-nums;
}

/* the time shares the last, shorter line */
.over {
  margin-left: -104px;
}

.row {
  display: flex;
  align-items: flex-end;
  gap: 26px;
  width: 100%;
  margin-left: -110px;
}

.avatar {
  flex: none;
  width: 84px;
  height: 84px;
  margin-bottom: -2px;
  border-radius: 50%;
  background: #653626;
  color: #fbcdbd;
  font-size: 35px;
  line-height: 84px;
  text-align: center;
}

.tail {
  position: absolute;
  left: -17px;
  bottom: 0;
  width: 30px;
  height: 36px;
  fill: #242625;
}

.quote {
  margin: 8px -20px 14px;
  padding: 28px 22px 33px 40px;
  border-radius: 24px;
  background: linear-gradient(90deg, #69a5f8 12px, #1d1d1d 12px);
  color: #c9c9c9;
  font-size: 36px;
  line-height: 48px;
}

.quote h3 {
  margin-bottom: 12px;
  color: #70a5ea;
  font-size: 35px;
  font-weight: 600;
}

.line {
  display: flex;
  align-items: center;
  gap: 16px;
  white-space: nowrap;
}

.icon {
  flex: none;
  width: 54px;
  height: 54px;
}

.quote .line {
  gap: 13px;
}

.quote .icon {
  width: 46px;
  height: 46px;
  opacity: 0.9;
}

.dollar {
  fill: #2a2620;
  font-size: 84px;
  font-weight: 600;
}

.dollar-small {
  font-size: 44px;
}

.cal-month {
  fill: #d0bcbc;
  font-size: 32px;
}

.cal-day {
  fill: #333;
  font-size: 92px;
}

.scroll-down {
  position: absolute;
  right: 27px;
  bottom: 72px;
  display: flex;
  align-items: center;
  justify-content: center;
  width: 96px;
  height: 96px;
  padding: 0;
  border: 0;
  border-radius: 50%;
  background: #232424;
}

.scroll-down svg {
  width: 40px;
  fill: none;
  stroke: #fff;
  stroke-width: 5;
  stroke-linecap: round;
  stroke-linejoin: round;
}

.bottom-bar {
  height: 40px;
  background: #101211;
}
```
